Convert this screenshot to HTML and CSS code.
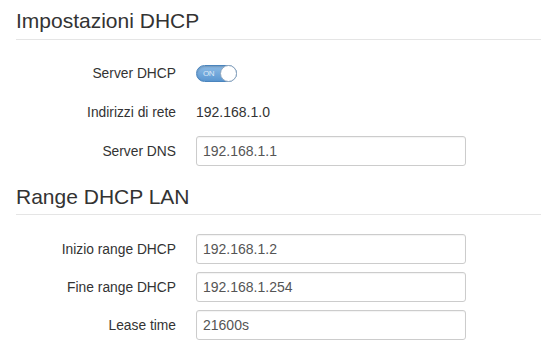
FILE: index.html
```html
<!DOCTYPE html>
<html lang="it">
<head>
    <meta charset="UTF-8">
    <meta name="viewport" content="width=device-width, initial-scale=1.0">
    <title>Impostazioni DHCP</title>
    <link rel="stylesheet" href="styles.css">
</head>
<body>
    <div class="page">
        <h2 class="section-title">Impostazioni DHCP</h2>

        <div class="form-group">
            <div class="form-row">
                <label class="form-label">Server DHCP</label>
                <div class="form-control-wrap">
                    <span class="switch on">
                        <span class="switch-text">ON</span>
                        <span class="switch-knob"></span>
                    </span>
                </div>
            </div>
            <div class="form-row">
                <label class="form-label">Indirizzi di rete</label>
                <div class="form-control-wrap">
                    <span class="static-value">192.168.1.0</span>
                </div>
            </div>
            <div class="form-row">
                <label class="form-label" for="dns">Server DNS</label>
                <div class="form-control-wrap">
                    <input type="text" id="dns" class="text-input" value="192.168.1.1">
                </div>
            </div>
        </div>

        <h2 class="section-title second">Range DHCP LAN</h2>

        <div class="form-group range">
            <div class="form-row">
                <label class="form-label" for="start">Inizio range DHCP</label>
                <div class="form-control-wrap">
                    <input type="text" id="start" class="text-input" value="192.168.1.2">
                </div>
            </div>
            <div class="form-row">
                <label class="form-label" for="end">Fine range DHCP</label>
                <div class="form-control-wrap">
                    <input type="text" id="end" class="text-input" value="192.168.1.254">
                </div>
            </div>
            <div class="form-row">
                <label class="form-label" for="lease">Lease time</label>
                <div class="form-control-wrap">
                    <input type="text" id="lease" class="text-input" value="21600s">
                </div>
            </div>
        </div>
    </div>
</body>
</html>
```

FILE: styles.css
```css
body {
    font-family: 'Liberation Sans', Arial, sans-serif;
    margin: 0;
    padding: 0;
    background-color: #fff;
    color: #333;
}

.page {
    padding: 0 0 0 16px;
}

.section-title {
    margin: 0;
    padding: 9px 0 7px;
    font-size: 21px;
    font-weight: normal;
    line-height: 1.1;
    color: #333;
    border-bottom: 1px solid #e5e5e5;
}

.section-title.second {
    margin-top: 10px;
    padding-bottom: 6px;
}

.form-group {
    display: flex;
    flex-direction: column;
    gap: 9px;
    padding-top: 18px;
}

.form-group.range {
    gap: 8px;
    padding-top: 19px;
}

.form-row {
    display: flex;
    align-items: center;
    height: 30px;
}

.form-label {
    width: 160px;
    padding-right: 20px;
    text-align: right;
    font-size: 13.8px;
    color: #333;
}

.form-control-wrap {
    display: flex;
    align-items: center;
}

.static-value {
    font-size: 14px;
    color: #333;
}

.text-input {
    width: 270px;
    height: 30px;
    box-sizing: border-box;
    padding: 0 6px;
    border: 1px solid #ccc;
    border-radius: 3px;
    font-family: 'Liberation Sans', Arial, sans-serif;
    font-size: 14px;
    color: #555;
    box-shadow: inset 0 1px 1px rgba(0, 0, 0, 0.05);
}

.switch {
    position: relative;
    display: inline-block;
    width: 41px;
    height: 17px;
    box-sizing: border-box;
    border-radius: 9px;
    border: 1px solid #4a84bd;
    background: linear-gradient(#8dbbe6, #5b97d1);
    box-shadow: inset 0 1px 2px rgba(0, 0, 0, 0.2);
}

.switch-text {
    position: absolute;
    left: 6px;
    top: 3px;
    font-size: 8px;
    line-height: 9px;
    color: #dce9f6;
    letter-spacing: -0.5px;
}

.switch-knob {
    position: absolute;
    right: -1px;
    top: -1px;
    width: 17px;
    height: 17px;
    box-sizing: border-box;
    border-radius: 50%;
    background: #fff;
    border: 1px solid #8fa6bd;
}
```
